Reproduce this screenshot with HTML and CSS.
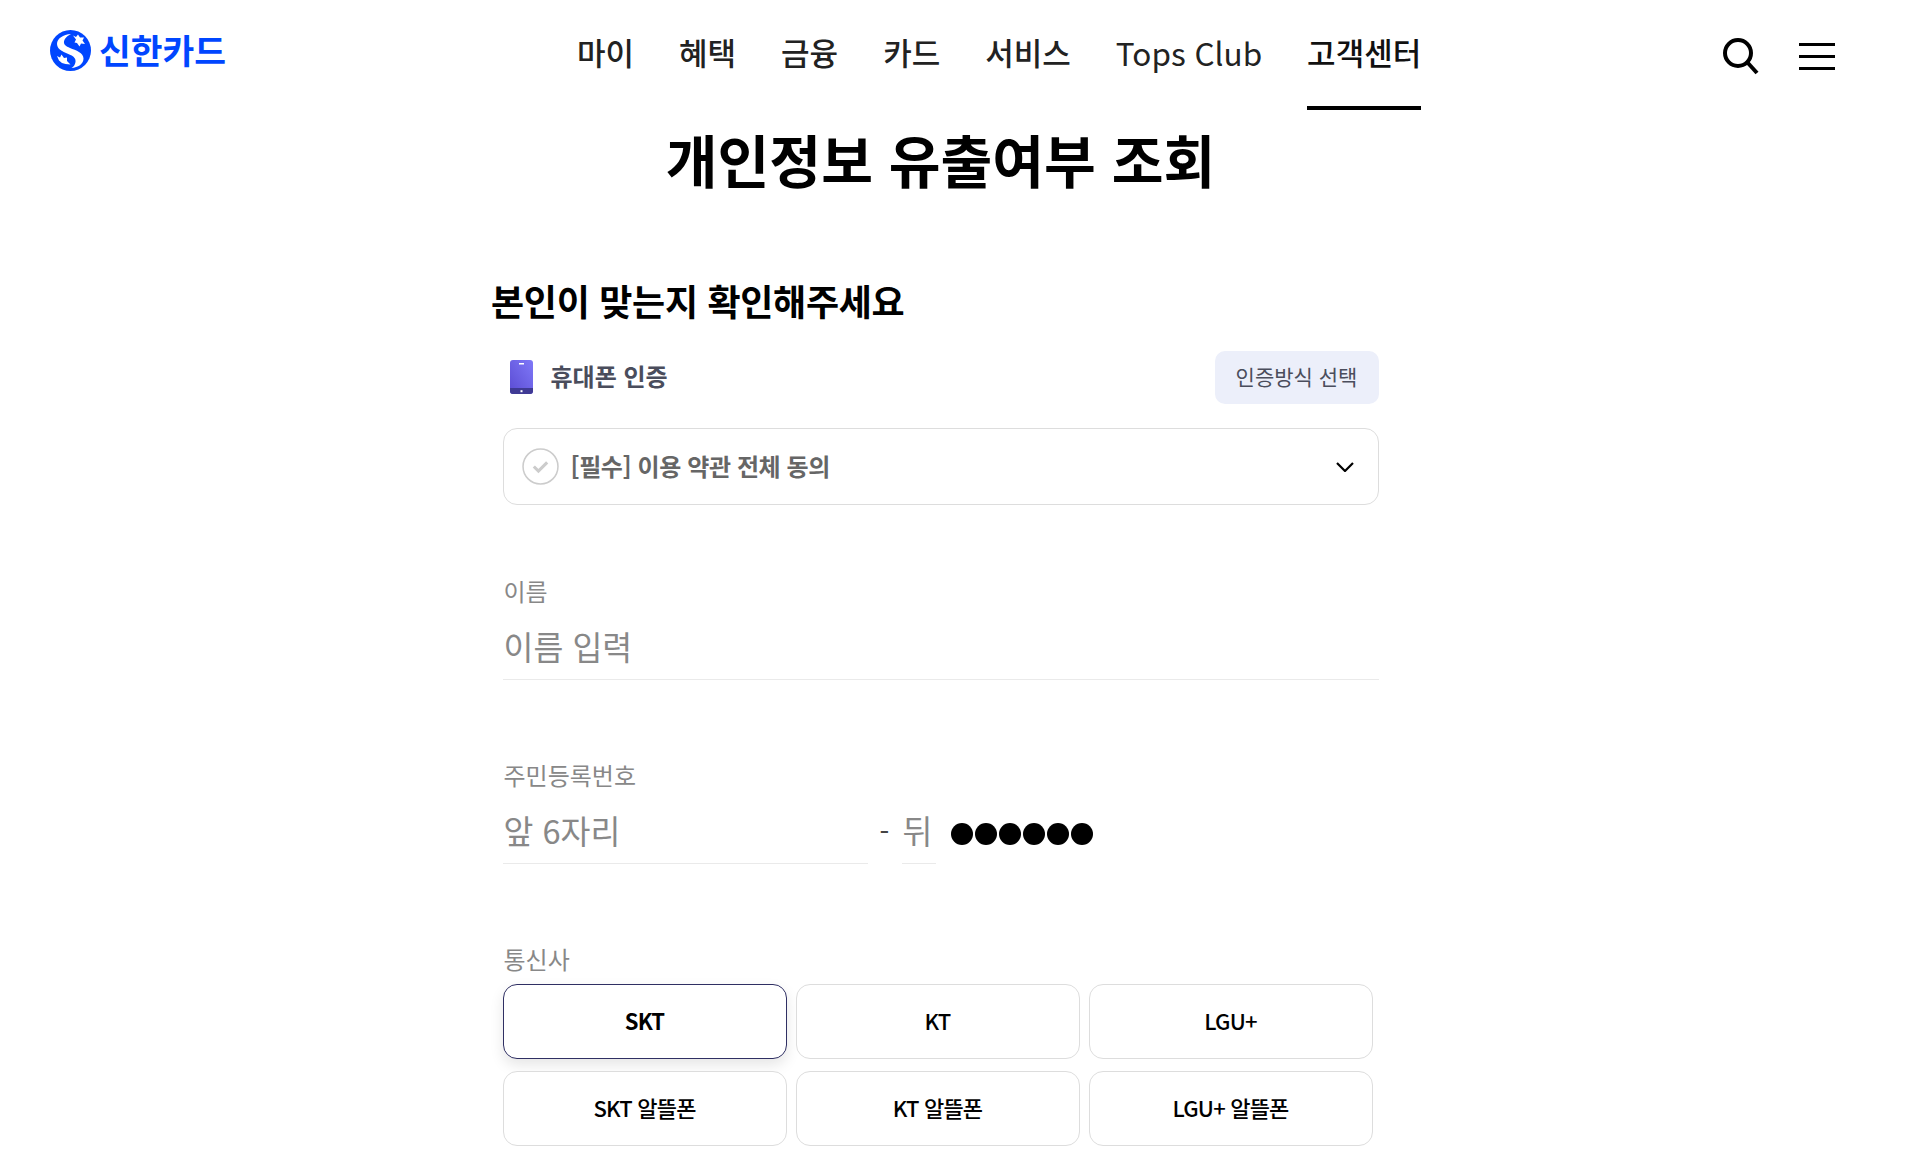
FILE: index.html
```html
<!DOCTYPE html>
<html lang="ko">
<head>
  <meta charset="UTF-8">
  <title>개인정보 유출여부 조회</title>
  <link rel="stylesheet" href="styles.css">
</head>
<body>

  <header class="header">
    <a class="logo" href="#">
      <svg class="logo-mark" viewBox="0 0 41 41">
        <circle cx="20.5" cy="20.5" r="20.5" fill="#0046ff"/>
        <path d="M21 4C13 4.500 7 8.500 7 14C7 20 15 22.500 20.500 25C24 26.500 26 29 25.500 32C25 35 23.500 37 21.500 38C28 37.500 33.500 34 33.500 28.500C33.500 22.500 26 20.500 20 18C16 16.300 13.500 14.500 14 11.500C14.500 8.500 17.500 5.500 21 4Z" fill="#fff"/>
        <path d="M23 5.500L26 7L28 4.500L30 7.500L34 7.500L32.500 10.500L35 14L31 13.500L29.500 16.500L27 13L24.500 12.500L26 9.500Z" fill="#fff"/>
        <path d="M7 26L10 27.500L11.500 24.500L14 28L17 27.500L17 31L20.500 34.500L15.500 34L12 33L9 30.500Z" fill="#fff"/>
      </svg>
      <span class="logo-text">신한카드</span>
    </a>
    <nav class="gnb">
      <a href="#">마이</a>
      <a href="#">혜택</a>
      <a href="#">금융</a>
      <a href="#">카드</a>
      <a href="#">서비스</a>
      <a href="#" class="en">Tops Club</a>
      <a href="#" class="on">고객센터</a>
    </nav>
    <div class="util">
      <svg class="ico-search" viewBox="0 0 36 38" fill="none" stroke="#000" stroke-width="4">
        <circle cx="15" cy="15" r="13"/>
        <path d="M24.500 24.500L34 35"/>
      </svg>
      <div class="ico-menu"><i></i><i></i><i></i></div>
    </div>
  </header>

  <main class="content">
    <h1 class="page-title">개인정보 유출여부 조회</h1>
    <h2 class="sec-title">본인이 맞는지 확인해주세요</h2>

    <div class="form">
      <div class="auth-row">
        <div class="auth-name">
          <svg class="ico-phone" viewBox="0 0 23 34">
            <defs>
              <linearGradient id="phoneGrad" x1="1" y1="0" x2="0" y2="1">
                <stop offset="0" stop-color="#7f78f8"/>
                <stop offset="1" stop-color="#5a4bd2"/>
              </linearGradient>
            </defs>
            <rect width="23" height="34" rx="3" fill="url(#phoneGrad)"/>
            <path d="M0 28H23V31A3 3 0 0 1 20 34H3A3 3 0 0 1 0 31Z" fill="#3f3a94"/>
            <rect x="9" y="3" width="5" height="1.500" fill="#fff"/>
            <rect x="10.500" y="30.200" width="2" height="2" fill="#fff"/>
          </svg>
          <span>휴대폰 인증</span>
        </div>
        <button class="btn-auth" type="button">인증방식 선택</button>
      </div>

      <div class="agree-box">
        <svg class="ico-check" viewBox="0 0 36 36" fill="none">
          <circle cx="18" cy="18" r="17" stroke="#ccc" stroke-width="1.500"/>
          <path d="M11.500 18L16 22.500L24.500 14" stroke="#ccc" stroke-width="3"/>
        </svg>
        <span class="agree-text">[필수] 이용 약관 전체 동의</span>
        <svg class="ico-chevron" viewBox="0 0 18 10" fill="none" stroke="#000" stroke-width="2.200">
          <path d="M1 1L9 9L17 1"/>
        </svg>
      </div>

      <div class="field field-name">
        <label class="label">이름</label>
        <input class="input" type="text" placeholder="이름 입력">
      </div>

      <div class="field field-jumin">
        <label class="label">주민등록번호</label>
        <div class="jumin">
          <input class="input jumin-front" type="text" placeholder="앞 6자리">
          <span class="dash">-</span>
          <input class="input jumin-back" type="text" placeholder="뒤">
          <div class="dots"><i></i><i></i><i></i><i></i><i></i><i></i></div>
        </div>
      </div>

      <div class="field field-telecom">
        <label class="label">통신사</label>
        <div class="telecom">
          <button type="button" class="on">SKT</button>
          <button type="button">KT</button>
          <button type="button">LGU+</button>
          <button type="button">SKT 알뜰폰</button>
          <button type="button">KT 알뜰폰</button>
          <button type="button">LGU+ 알뜰폰</button>
        </div>
      </div>
    </div>
  </main>

</body>
</html>
```

FILE: styles.css
```css
html, body {
  margin: 0;
  padding: 0;
  height: 100%;
  overflow: hidden;
  background: #fff;
  color: #000;
  font-family: "Noto Sans CJK KR", "Noto Sans", sans-serif;
}

a {
  color: inherit;
  text-decoration: none;
}

button, input {
  font-family: inherit;
}

/* header */
.header {
  display: flex;
  align-items: flex-start;
  height: 110px;
  padding-left: 50px;
}

.logo {
  display: flex;
  align-items: center;
  gap: 8px;
  width: 176px;
  margin-top: 30px;
}

.logo-mark {
  width: 41px;
  height: 41px;
  flex: none;
}

.logo-text {
  margin-top: -2px;
  font-size: 34.500px;
  line-height: 41px;
  font-weight: 700;
  color: #0046ff;
  white-space: nowrap;
}

.gnb {
  display: flex;
  gap: 45px;
  margin-left: 351px;
}

.gnb a {
  height: 110px;
  box-sizing: border-box;
  padding-top: 30px;
  font-size: 31px;
  line-height: 44px;
  font-weight: 500;
  color: #222;
  white-space: nowrap;
}

.gnb a.en {
  font-size: 31.500px;
  font-weight: 400;
}

.gnb a.on {
  color: #111;
  border-bottom: 4px solid #000;
}

.util {
  display: flex;
  align-items: flex-start;
  gap: 40px;
  margin-left: auto;
  margin-right: 78px;
  margin-top: 38px;
}

.ico-search {
  width: 36px;
  height: 38px;
}

.ico-menu {
  display: flex;
  flex-direction: column;
  gap: 9px;
  width: 36px;
  margin-top: 5px;
}

.ico-menu i {
  display: block;
  height: 3px;
  background: #000;
}

/* titles */
.content {
  width: 1881px;
}

.page-title {
  margin: 13px 0 0;
  text-align: center;
  font-size: 56.300px;
  line-height: 72px;
  font-weight: 700;
}

.sec-title {
  margin: 80px 0 0 491px;
  font-size: 36px;
  line-height: 50px;
  font-weight: 700;
  letter-spacing: -0.300px;
}

/* form */
.form {
  width: 876px;
  margin: 0 auto;
}

.auth-row {
  display: flex;
  justify-content: space-between;
  align-items: center;
  height: 53px;
  margin-top: 26px;
}

.auth-name {
  display: flex;
  align-items: center;
  gap: 18px;
  padding-left: 7px;
  font-size: 24px;
  font-weight: 700;
  color: #4a4d5c;
}

.auth-name span {
  margin-top: -5px;
}

.ico-phone {
  width: 23px;
  height: 34px;
  margin-top: -1px;
}

.btn-auth {
  width: 164px;
  height: 53px;
  padding: 0 0 3px;
  border: 0;
  border-radius: 10px;
  background: #eceffa;
  font-size: 21px;
  color: #4a4d5c;
}

.agree-box {
  display: flex;
  align-items: center;
  gap: 12px;
  height: 77px;
  box-sizing: border-box;
  margin-top: 24px;
  padding: 0 24px 0 18px;
  border: 1px solid #ddd;
  border-radius: 14px;
}

.ico-check {
  width: 37px;
  height: 37px;
  flex: none;
}

.agree-text {
  flex: 1;
  margin-top: -2px;
  font-size: 24px;
  font-weight: 700;
  color: #666;
  letter-spacing: -0.400px;
}

.ico-chevron {
  width: 18px;
  height: 10px;
}

.field {
  display: flex;
  flex-direction: column;
}

.field-name {
  margin-top: 69px;
}

.field-jumin,
.field-telecom {
  margin-top: 78px;
}

.label {
  margin-bottom: 5px;
  padding-left: 1px;
  font-size: 24px;
  line-height: 34px;
  color: #888;
}

.input {
  width: 100%;
  height: 67px;
  box-sizing: border-box;
  padding: 0 0 1px 1px;
  border: 0;
  border-bottom: 1px solid #eaeaea;
  outline: none;
  background: transparent;
  font-size: 32.500px;
  font-weight: 400;
}

.input::placeholder {
  color: #888;
  opacity: 1;
}

.jumin {
  display: flex;
  align-items: center;
}

.jumin-front {
  width: 365px;
}

.dash {
  margin-left: 12px;
  width: 22px;
  font-size: 28px;
  color: #444;
}

.jumin-back {
  width: 34px;
}

.dots {
  display: flex;
  gap: 2px;
  margin: 7px 0 0 15px;
}

.dots i {
  width: 22px;
  height: 22px;
  border-radius: 50%;
  background: #000;
}

.telecom {
  display: grid;
  grid-template-columns: repeat(3, 284px);
  grid-auto-rows: 75px;
  column-gap: 9px;
  row-gap: 12px;
  margin-top: 3px;
}

.telecom button {
  padding: 0 0 4px;
  border: 1px solid #ddd;
  border-radius: 14px;
  background: #fff;
  font-size: 22px;
  font-weight: 500;
  letter-spacing: -0.800px;
  color: #000;
}

.telecom button.on {
  border-color: #2f2f63;
  font-weight: 700;
  box-shadow: 0 6px 14px rgba(0, 0, 0, 0.1);
}
```
